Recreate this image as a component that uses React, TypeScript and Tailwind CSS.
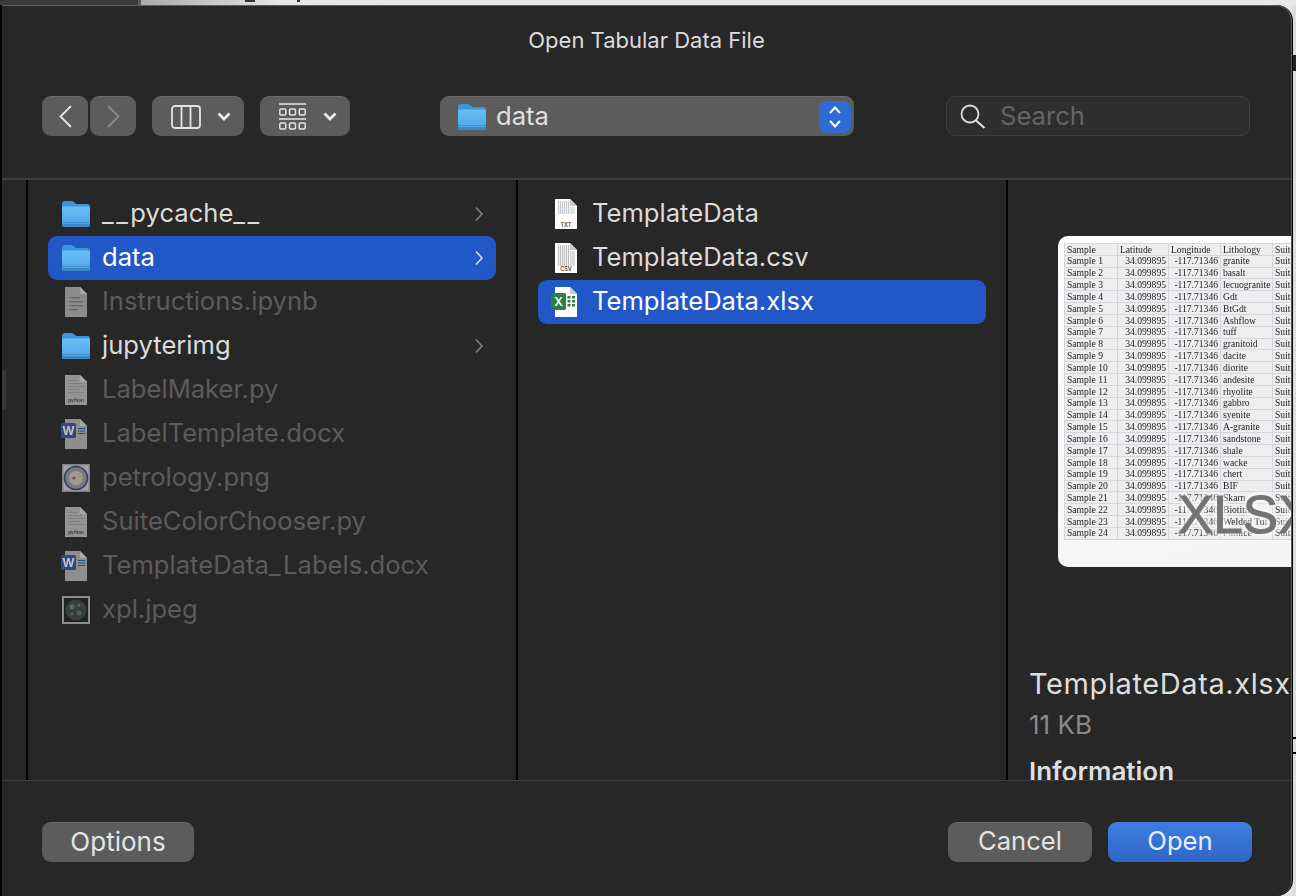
import type { ReactNode } from "react";

type Kind = "folder" | "lines" | "python" | "word" | "txt" | "csv" | "excel" | "seal" | "rock";
type Entry = { name: string; kind: Kind; dim?: boolean; selected?: boolean; chevron?: boolean };

const parentEntries: Entry[] = [
  { name: "__pycache__", kind: "folder", chevron: true },
  { name: "data", kind: "folder", chevron: true, selected: true },
  { name: "Instructions.ipynb", kind: "lines", dim: true },
  { name: "jupyterimg", kind: "folder", chevron: true },
  { name: "LabelMaker.py", kind: "python", dim: true },
  { name: "LabelTemplate.docx", kind: "word", dim: true },
  { name: "petrology.png", kind: "seal", dim: true },
  { name: "SuiteColorChooser.py", kind: "python", dim: true },
  { name: "TemplateData_Labels.docx", kind: "word", dim: true },
  { name: "xpl.jpeg", kind: "rock", dim: true },
];

const dataEntries: Entry[] = [
  { name: "TemplateData", kind: "txt" },
  { name: "TemplateData.csv", kind: "csv" },
  { name: "TemplateData.xlsx", kind: "excel", selected: true },
];

const lithology = [
  "granite", "basalt", "lecuogranite", "Gdt", "BtGdt", "Ashflow", "tuff", "granitoid",
  "dacite", "diorite", "andesite", "rhyolite", "gabbro", "syenite", "A-granite", "sandstone",
  "shale", "wacke", "chert", "BIF", "Skarn", "Biotitite", "Welded Tuff", "Pumice",
];

function FolderIcon() {
  return (
    <svg width="28" height="26" viewBox="0 0 28 26" className="shrink-0">
      <defs>
        <linearGradient id="folderFront" x1="0" y1="0" x2="0" y2="1">
          <stop offset="0" stopColor="#69c0f6" />
          <stop offset="1" stopColor="#4ba3e4" />
        </linearGradient>
      </defs>
      <path d="M0 3a3 3 0 0 1 3-3h6.5a3 3 0 0 1 2 .8L14 3h11.5A2.5 2.5 0 0 1 28 5.5V12H0z" fill="#3d94d8" />
      <path d="M0 7.5A2 2 0 0 1 2 5.5h24a2 2 0 0 1 2 2V24a2 2 0 0 1-2 2H2a2 2 0 0 1-2-2z" fill="url(#folderFront)" />
      <rect x="0" y="21" width="28" height="1" fill="#3f90d0" />
      <path d="M0 23h28v1a2 2 0 0 1-2 2H2a2 2 0 0 1-2-2z" fill="#3a88c6" />
    </svg>
  );
}

function Page({ children, fill = "#ffffff" }: { children?: ReactNode; fill?: string }) {
  return (
    <svg width="28" height="32" viewBox="0 0 28 32" className="shrink-0 overflow-visible">
      <path d="M3 1h15l7 7v23H3z" fill={fill} />
      <path d="M18 1l7 7h-7z" fill="#c9c9c9" />
      {children}
    </svg>
  );
}

function Stripes({ color = "#b5b5b5", bottom = 21 }: { color?: string; bottom?: number }) {
  const xs = [6, 8, 10, 12, 14, 16];
  return (
    <g>
      {xs.map((x) => (
        <rect key={x} x={x} y="3" width="1.2" height={bottom - 3} fill={color} />
      ))}
      <rect x="18" y="9" width="5" height={bottom - 9} fill={color} opacity="0.5" />
    </g>
  );
}

function FileIcon({ kind }: { kind: Kind }) {
  if (kind === "folder") return <FolderIcon />;
  if (kind === "lines")
    return (
      <Page fill="#a5a5a5">
        <path d="M18 1l7 7h-7z" fill="#c4c4c4" />
        <g fill="#787878">
          <rect x="7" y="11" width="11" height="1.4" />
          <rect x="7" y="15" width="14" height="1.4" />
          <rect x="7" y="19" width="14" height="1.4" />
          <rect x="7" y="23" width="9" height="1.4" />
        </g>
      </Page>
    );
  if (kind === "python")
    return (
      <Page fill="#b0b0b0">
        <g fill="#969696">
          <rect x="6" y="6" width="10" height="1" />
          <rect x="6" y="9" width="14" height="1" />
          <rect x="6" y="12" width="17" height="1" />
          <rect x="6" y="15" width="12" height="1" />
          <rect x="6" y="18" width="16" height="1" />
        </g>
        <text x="14" y="28" textAnchor="middle" fontSize="4.5" fontWeight="700" fill="#444444">python</text>
      </Page>
    );
  if (kind === "word")
    return (
      <Page fill="#a8a8a8">
        <rect x="-1" y="5" width="15" height="15" rx="1.5" fill="#2f5496" />
        <text x="6.5" y="17" textAnchor="middle" fontSize="12" fontWeight="700" fill="#e8e8e8">W</text>
        <g fill="#2f5496">
          <rect x="16" y="10" width="7" height="1" />
          <rect x="16" y="12.5" width="7" height="1" />
          <rect x="16" y="15" width="7" height="1" />
        </g>
      </Page>
    );
  if (kind === "excel")
    return (
      <Page>
        <rect x="-1" y="7" width="15" height="17" rx="1.5" fill="#2e7d46" />
        <text x="6.5" y="20" textAnchor="middle" fontSize="12" fontWeight="600" fill="#ffffff">X</text>
        <g fill="#2e7d46">
          <rect x="15.5" y="10" width="3" height="2.5" />
          <rect x="20" y="10" width="3" height="2.5" />
          <rect x="15.5" y="14" width="3" height="2.5" />
          <rect x="20" y="14" width="3" height="2.5" />
          <rect x="15.5" y="18" width="3" height="2.5" />
          <rect x="20" y="18" width="3" height="2.5" />
        </g>
      </Page>
    );
  if (kind === "txt" || kind === "csv")
    return (
      <Page>
        <Stripes bottom={kind === "csv" ? 24 : 16} color={kind === "csv" ? "#bdbdbd" : "#c8c8c8"} />
        <text x="14" y="29" textAnchor="middle" fontSize="5.5" fontWeight="600" fill="#444444">
          {kind === "txt" ? "TXT" : "CSV"}
        </text>
      </Page>
    );
  if (kind === "seal")
    return (
      <svg width="28" height="28" viewBox="0 0 28 28" className="shrink-0">
        <rect width="28" height="28" fill="#9a9a9a" />
        <rect x="1.5" y="1.5" width="25" height="25" fill="#c4c4c4" />
        <circle cx="14" cy="14" r="11.5" fill="#909090" stroke="#33407a" strokeWidth="1.5" />
        <circle cx="14" cy="14" r="7" fill="#c2b5b5" />
        <circle cx="12" cy="14" r="1.5" fill="#a84a55" />
        <path d="M15 13l4-2v2z" fill="#b5ad4a" />
      </svg>
    );
  return (
    <svg width="28" height="28" viewBox="0 0 28 28" className="shrink-0">
      <rect width="28" height="28" fill="#a8a8a8" />
      <rect x="2" y="2" width="24" height="24" fill="#1f211f" />
      <circle cx="14" cy="14" r="10.5" fill="#3d4540" />
      <circle cx="10" cy="11" r="2.5" fill="#5f7a78" />
      <circle cx="17" cy="9" r="1.5" fill="#77705c" />
      <circle cx="17" cy="17" r="2.5" fill="#586b6a" />
      <circle cx="10" cy="18" r="1.5" fill="#6b6a58" />
    </svg>
  );
}

// underscores are wider in the system font than in Inter
function FileName({ name }: { name: string }) {
  return (
    <>
      {name.split(/(_+)/).map((part, i) =>
        part.startsWith("_") ? (
          <span key={i} className="tracking-[2.5px]">{part}</span>
        ) : (
          part
        )
      )}
    </>
  );
}

function Row({ entry }: { entry: Entry }) {
  const textColor = entry.selected ? "text-white" : entry.dim ? "text-[#5c5b5b]" : "text-[#dcdcdc]";
  return (
    <div
      className={`flex h-[44px] items-center rounded-[9px] pl-[14px] pr-[13px] ${
        entry.selected ? "bg-[#2257c8]" : ""
      }`}
    >
      <span className={`flex w-[28px] justify-center ${entry.dim ? "opacity-80" : ""}`}>
        <FileIcon kind={entry.kind} />
      </span>
      <span className={`ml-[12px] flex-1 whitespace-nowrap pb-[2px] text-[25.6px] leading-[32px] ${textColor}`}>
        <FileName name={entry.name} />
      </span>
      {entry.chevron && (
        <svg width="8" height="16" viewBox="0 0 8 16" fill="none">
          <path d="M1 1.5L7 8L1 14.5" stroke={entry.selected ? "#d8e2f8" : "#858585"} strokeWidth="1.5" />
        </svg>
      )}
    </div>
  );
}

function ToolButton({ className = "", children }: { className?: string; children: ReactNode }) {
  return (
    <div className={`flex h-[40px] items-center rounded-[9px] border-t border-[#6b6a6a] bg-[#5d5c5c] ${className}`}>
      {children}
    </div>
  );
}

function ChevronDown() {
  return (
    <svg width="14" height="9" viewBox="0 0 14 9" fill="none">
      <path d="M1.5 1.5L7 7L12.5 1.5" stroke="#ececec" strokeWidth="2.8" />
    </svg>
  );
}

function PreviewTable() {
  const cell = "flex h-[11.83px] items-center overflow-hidden whitespace-nowrap border-b border-r border-[#d6d4de] px-[2px]";
  return (
    <div className="grid w-[290px] grid-cols-[53px_51px_52px_52px_82px] border-l border-t border-[#d6d4de] bg-[#efeeef] font-['Liberation_Serif',serif] text-[9.6px] leading-none text-[#1c1c1c] blur-[0.4px]">
      {["Sample", "Latitude", "Longitude", "Lithology", "Suite"].map((h) => (
        <div key={h} className={cell}>{h}</div>
      ))}
      {lithology.map((rock, i) => (
        <div key={rock} className="contents">
          <div className={cell}>Sample {i + 1}</div>
          <div className={`${cell} justify-end`}>34.099895</div>
          <div className={`${cell} justify-end`}>-117.71346</div>
          <div className={cell}>{rock}</div>
          <div className={cell}>Suite</div>
        </div>
      ))}
    </div>
  );
}

export default function App() {
  return (
    <div className="relative flex h-[896px] w-[1296px] flex-col overflow-hidden bg-[#e4e4e4] font-[Inter,sans-serif]">
      {/* window behind the dialog */}
      <div className="flex h-[5px] shrink-0">
        <div className="w-[138px] bg-[#3b3b3b]" />
        <div className="w-[3px] bg-[#5a5a5a]" />
        <div className="flex-1 bg-[linear-gradient(90deg,#a9a9a9,#e6e6e6_12%,#e8e8e8)]" />
      </div>
      <div className="flex flex-1">
        <div className="w-[2px] bg-black" />
        <div className="relative z-10 flex w-[1290px] flex-col rounded-tr-[16px] rounded-br-[16px] border-r border-t border-[#5f5e5e] bg-[#282727] shadow-[1px_0_0_#000]">
          <header className="h-[174px] shrink-0 border-b-2 border-[#3f3e3e]">
            <h1 className="pt-[20px] text-center text-[22px] font-normal leading-[28px] text-[#dcdcdc]">Open Tabular Data File</h1>
            <div className="mt-[42px] flex pl-[40px]">
              <ToolButton className="w-[46px] justify-center">
                <svg width="13" height="23" viewBox="0 0 13 23" fill="none">
                  <path d="M12 1L1.5 11.5L12 22" stroke="#e4e4e4" strokeWidth="1.8" />
                </svg>
              </ToolButton>
              <ToolButton className="ml-[2px] w-[46px] justify-center">
                <svg width="13" height="23" viewBox="0 0 13 23" fill="none">
                  <path d="M1 1L11.5 11.5L1 22" stroke="#8c8b8b" strokeWidth="1.8" />
                </svg>
              </ToolButton>
              <ToolButton className="ml-[16px] w-[92px] pl-[19px]">
                <svg width="30" height="24" viewBox="0 0 30 24" fill="none">
                  <rect x="1" y="1" width="28" height="22" rx="3" stroke="#e4e4e4" strokeWidth="1.8" />
                  <path d="M10.5 1V23M19.5 1V23" stroke="#e4e4e4" strokeWidth="1.8" />
                </svg>
                <span className="ml-[16px]"><ChevronDown /></span>
              </ToolButton>
              <ToolButton className="ml-[16px] w-[90px] pl-[19px]">
                <svg width="27" height="27" viewBox="0 0 27 27" fill="none" stroke="#e4e4e4">
                  <path d="M0 1H27M0 16H27" strokeWidth="1.6" />
                  <rect x="0.8" y="6" width="6" height="6" rx="1.2" strokeWidth="1.5" />
                  <rect x="10.5" y="6" width="6" height="6" rx="1.2" strokeWidth="1.5" />
                  <rect x="20.2" y="6" width="6" height="6" rx="1.2" strokeWidth="1.5" />
                  <rect x="0.8" y="20" width="6" height="6" rx="1.2" strokeWidth="1.5" />
                  <rect x="10.5" y="20" width="6" height="6" rx="1.2" strokeWidth="1.5" />
                  <rect x="20.2" y="20" width="6" height="6" rx="1.2" strokeWidth="1.5" />
                </svg>
                <span className="ml-[17px]"><ChevronDown /></span>
              </ToolButton>
              <ToolButton className="ml-[90px] w-[414px] pl-[18px] pr-[3px]">
                <FolderIcon />
                <span className="ml-[10px] flex-1 pb-[2px] text-[25.6px] leading-[32px] text-[#e0e0e0]">data</span>
                <span className="flex h-[32px] w-[32px] items-center justify-center rounded-[8px] bg-[#2f6bd6]">
                  <svg width="14" height="26" viewBox="0 0 14 26" fill="none">
                    <path d="M2 9L7 3.5L12 9M2 17L7 22.5L12 17" stroke="#ffffff" strokeWidth="2" />
                  </svg>
                </span>
              </ToolButton>
              <div className="ml-[92px] flex h-[40px] w-[304px] items-center rounded-[9px] border border-[#3f3e3e] bg-[#2f2e2e] pl-[13px]">
                <svg width="26" height="25" viewBox="0 0 26 25" fill="none">
                  <circle cx="10" cy="10" r="8.5" stroke="#dcdcdc" strokeWidth="1.8" />
                  <path d="M16 16.5L24.5 24" stroke="#dcdcdc" strokeWidth="2.2" />
                </svg>
                <span className="ml-[14px] text-[25.6px] leading-[32px] text-[#666565]">Search</span>
              </div>
            </div>
          </header>

          <main className="flex h-[600px] shrink-0">
            <div className="relative w-[26px] shrink-0 border-r-2 border-black">
              <div className="absolute left-0 top-[190px] h-[40px] w-[4px] rounded-r-[3px] bg-[#3a3939]" />
            </div>
            <div className="w-[490px] shrink-0 border-r-2 border-black px-[20px] pt-[12px]">
              {parentEntries.map((entry) => (
                <Row key={entry.name} entry={entry} />
              ))}
            </div>
            <div className="w-[490px] shrink-0 border-r-2 border-black px-[20px] pt-[12px]">
              {dataEntries.map((entry) => (
                <Row key={entry.name} entry={entry} />
              ))}
            </div>
            <aside className="flex-1 overflow-hidden">
              <div className="relative ml-[50px] mt-[56px] h-[331px] w-[300px] rounded-[10px] bg-[linear-gradient(160deg,#ffffff,#f3f3f3)] pl-[6px] pt-[7px]">
                <PreviewTable />
                <span className="absolute left-[120px] top-[252px] text-[53px] leading-none font-['Liberation_Sans',sans-serif] text-[#747474] [-webkit-text-stroke:1px_#747474] [text-shadow:0_0_6px_#ffffff,0_0_6px_#ffffff,0_0_6px_#ffffff]">
                  XLSX
                </span>
              </div>
              <div className="ml-[21px] mt-[101px] whitespace-nowrap text-[29px] leading-[32px] tracking-[0.6px] text-[#dedede]">TemplateData.xlsx</div>
              <div className="ml-[21px] mt-[11px] text-[26px] leading-[28px] text-[#8a8989]">11 KB</div>
              <div className="ml-[21px] mt-[18px] text-[26px] font-semibold leading-[30px] text-[#dedede]">Information</div>
            </aside>
          </main>

          <footer className="flex flex-1 items-start justify-between border-t border-[#3f3e3e] pl-[40px] pr-[39px] pt-[41px]">
            <ToolButton className="w-[152px] justify-center pb-[2px] text-[26px] text-[#e4e4e4]">Options</ToolButton>
            <div className="flex gap-[16px]">
              <ToolButton className="w-[144px] justify-center pb-[2px] text-[25.6px] text-[#e4e4e4]">Cancel</ToolButton>
              <div className="flex h-[40px] w-[144px] items-center justify-center rounded-[9px] bg-[linear-gradient(180deg,#3e7de2,#2f67c4)] pb-[2px] text-[25.6px] text-[#e8eefb]">
                Open
              </div>
            </div>
          </footer>
        </div>
        <div className="relative flex-1 bg-[#dedede]">
          <div className="absolute right-0 top-[50px] h-[16px] w-[3px] bg-[#222222]" />
          <div className="absolute right-0 top-[732px] h-[2px] w-[3px] bg-black" />
          <div className="absolute right-0 top-[747px] h-[2px] w-[3px] bg-black" />
        </div>
      </div>
      <span className="absolute left-[245px] top-0 h-[2px] w-[10px] bg-[#333333]" />
      <span className="absolute left-[297px] top-0 h-[2px] w-[3px] bg-[#333333]" />
    </div>
  );
}
